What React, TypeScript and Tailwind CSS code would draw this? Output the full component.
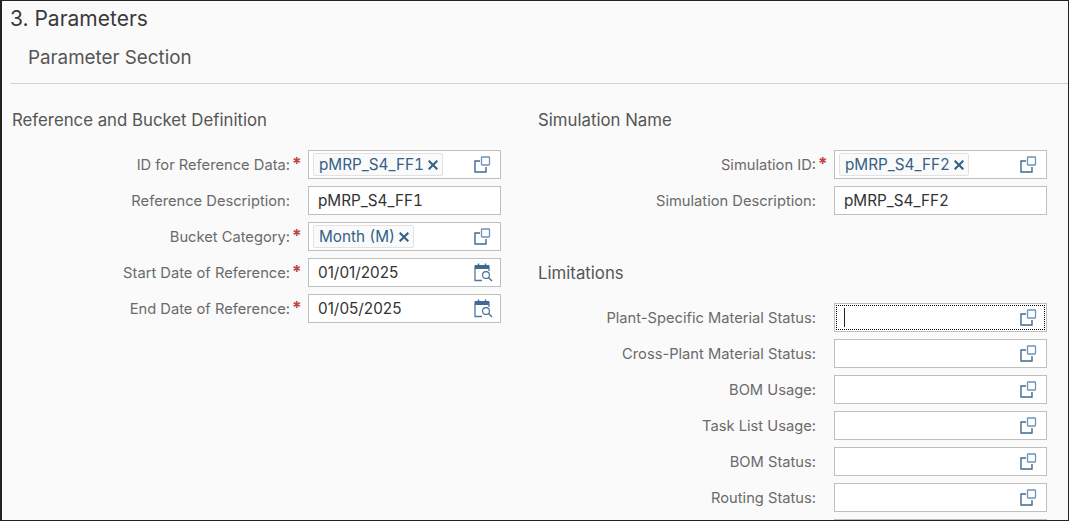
import type { ReactNode } from "react";

const ValueHelp = () => (
  <svg width="17" height="17" viewBox="0 0 17 17" fill="none" className="shrink-0">
    <path d="M6 5H1v11h11v-5" stroke="#3f6a92" strokeWidth="1.4" />
    <rect x="7.5" y="1" width="8" height="8" rx="0.5" strokeWidth="1.3" stroke="#6f93b4" />
  </svg>
);

const CalendarSearch = () => (
  <svg width="19" height="19" viewBox="0 0 19 19" fill="none" className="-mr-[2px] shrink-0">
    <path d="M1 2.5h14v3H1z" fill="#3f6a92" stroke="#3f6a92" />
    <path d="M4.5 0.5v3M11.5 0.5v3" stroke="#3f6a92" strokeWidth="1.4" />
    <path d="M1 5v12.5h7M15 5v3" stroke="#4f789c" strokeWidth="1.3" />
    <circle cx="12" cy="12" r="3.4" stroke="#3f6a92" strokeWidth="1.1" />
    <path d="M14.5 14.5l3.5 3.5" stroke="#3f6a92" strokeWidth="1.3" />
  </svg>
);

const Token = ({ text }: { text: string }) => (
  <span className="flex h-[23px] items-center gap-[4px] rounded-[2px] border border-[#e2e2e2] bg-[#fafafa] pl-[5px] pr-[4px] text-[15.3px] text-[#346187]">
    <span className="pt-[1px] tabular-nums">{text}</span>
    <svg width="10" height="10" viewBox="0 0 10 10" stroke="#346187" strokeWidth="2.1" fill="none">
      <path d="M0.7 0.7l8.6 8.6M9.3 0.7l-8.6 8.6" />
    </svg>
  </span>
);

const Field = ({
  label,
  required,
  width,
  children,
}: {
  label?: string;
  required?: boolean;
  width: string;
  children: ReactNode;
}) => (
  <div className="flex h-[29px] items-center">
    <div className={`${width} flex shrink-0 items-center justify-end text-[14.7px] text-[#6a6a6a]`}>
      <span className="pt-[2px]">{label ? `${label}:` : ""}</span>
      <span className="w-[18px] pl-[2px] text-[17px] font-bold leading-none text-[#bb4444]">{required ? "*" : ""}</span>
    </div>
    {children}
  </div>
);

const Input = ({
  width,
  children,
  focused,
  icon,
  token,
}: {
  width: string;
  children?: ReactNode;
  focused?: boolean;
  icon?: ReactNode;
  token?: boolean;
}) => (
  <div className={`${width} h-[29px] border border-[#bfbfbf] bg-white p-[1px] text-[15.3px]`}>
    <div
      className={`flex h-full items-center justify-between pr-[7px] text-[#333333] ${token ? "pl-[2px]" : "pl-[7px]"} ${
        focused ? "border border-dotted border-black" : "border border-transparent"
      }`}
    >
      {children}
      <span className="ml-auto">{icon}</span>
    </div>
  </div>
);

const Value = ({ text }: { text: string }) => <span className="pt-[2px] tabular-nums">{text}</span>;

const leftW = "w-[299px]";
const rightW = "w-[296px]";
const inputL = "w-[193px]";
const inputR = "w-[213px]";

const limitations = ["Cross-Plant Material Status", "BOM Usage", "Task List Usage", "BOM Status", "Routing Status"];

export default function App() {
  return (
    <div className="h-[521px] w-[1069px] overflow-hidden border-y border-r border-l-2 border-[#222222] bg-[#fafafa] [font-family:Inter,sans-serif]">
      <h1 className="pl-[8px] pt-[5px] text-[21px] leading-[26px] text-[#3a3a3a]">3. Parameters</h1>
      <div className="ml-[8px] mt-[8px] h-[44px] border-b border-[#d0d0d0] pl-[18px] pt-[4px] text-[18.8px] leading-[28px] text-[#555555]">
        Parameter Section
      </div>
      <div className="flex pt-[24px]">
        <div className="w-[525px] shrink-0 pl-[7px]">
          <h2 className="pl-[3px] text-[16.8px] leading-[24px] text-[#555555]">Reference and Bucket Definition</h2>
          <div className="mt-[18px] flex flex-col gap-[7px]">
            <Field label="ID for Reference Data" required width={leftW}>
              <Input width={inputL} token icon={<ValueHelp />}>
                <Token text="pMRP_S4_FF1" />
              </Input>
            </Field>
            <Field label="Reference Description" width={leftW}>
              <Input width={inputL}>
                <Value text="pMRP_S4_FF1" />
              </Input>
            </Field>
            <Field label="Bucket Category" required width={leftW}>
              <Input width={inputL} token icon={<ValueHelp />}>
                <Token text="Month (M)" />
              </Input>
            </Field>
            <Field label="Start Date of Reference" required width={leftW}>
              <Input width={inputL} icon={<CalendarSearch />}>
                <span className="pt-[2px]">01/01/2025</span>
              </Input>
            </Field>
            <Field label="End Date of Reference" required width={leftW}>
              <Input width={inputL} icon={<CalendarSearch />}>
                <span className="pt-[2px]">01/05/2025</span>
              </Input>
            </Field>
          </div>
        </div>
        <div className="flex-1 pl-[11px]">
          <h2 className="text-[16.8px] leading-[24px] text-[#555555]">Simulation Name</h2>
          <div className="mt-[18px] flex flex-col gap-[7px]">
            <Field label="Simulation ID" required width={rightW}>
              <Input width={inputR} token icon={<ValueHelp />}>
                <Token text="pMRP_S4_FF2" />
              </Input>
            </Field>
            <Field label="Simulation Description" width={rightW}>
              <Input width={inputR}>
                <Value text="pMRP_S4_FF2" />
              </Input>
            </Field>
          </div>
          <h2 className="mt-[46px] text-[16.8px] leading-[24px] text-[#555555]">Limitations</h2>
          <div className="mt-[18px] flex flex-col gap-[7px]">
            <Field label="Plant-Specific Material Status" width={rightW}>
              <Input width={inputR} focused icon={<ValueHelp />}>
                <span className="h-[19px] w-[1px] bg-[#222222]" />
              </Input>
            </Field>
            {limitations.map((label) => (
              <Field key={label} label={label} width={rightW}>
                <Input width={inputR} icon={<ValueHelp />} />
              </Field>
            ))}
            <Field width={rightW}>
              <Input width={inputR} />
            </Field>
          </div>
        </div>
      </div>
    </div>
  );
}
